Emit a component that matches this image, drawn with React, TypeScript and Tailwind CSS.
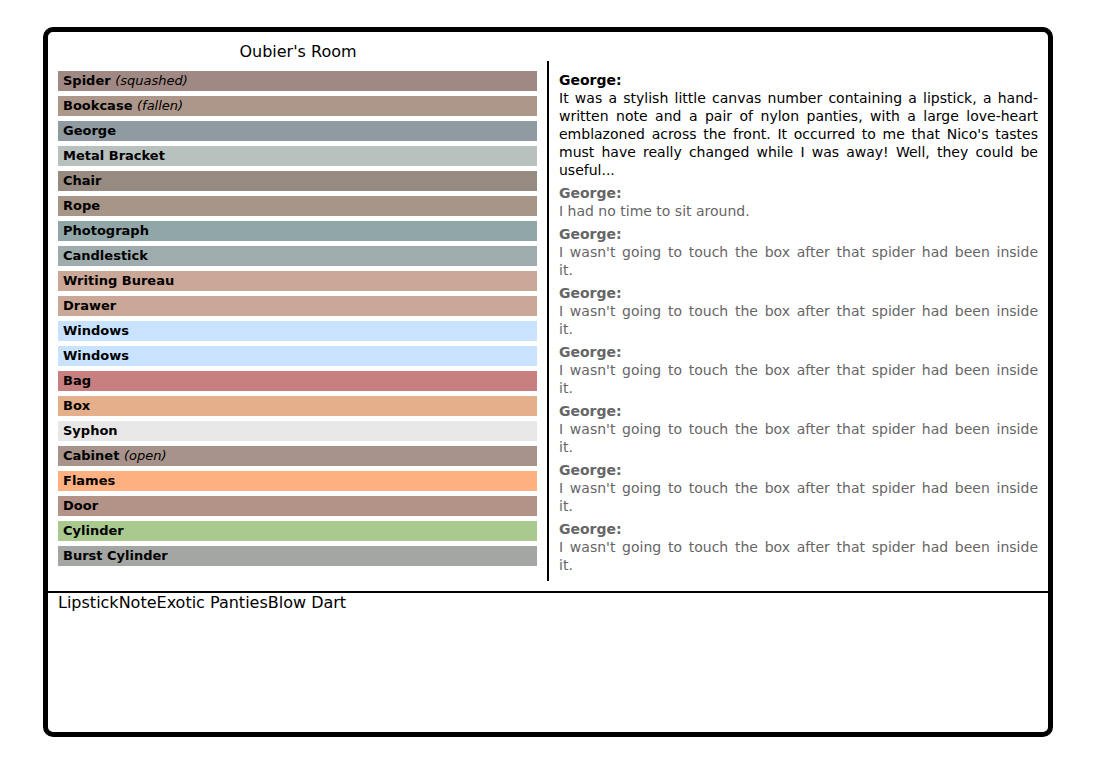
type RoomObject = { name: string; state?: string; color: string };
type Line = { speaker: string; text: string };

const objects: RoomObject[] = [
  { name: "Spider", state: "squashed", color: "bg-[#a08984]" },
  { name: "Bookcase", state: "fallen", color: "bg-[#ad978a]" },
  { name: "George", color: "bg-[#909ba1]" },
  { name: "Metal Bracket", color: "bg-[#b9c1bf]" },
  { name: "Chair", color: "bg-[#968a81]" },
  { name: "Rope", color: "bg-[#a79588]" },
  { name: "Photograph", color: "bg-[#91a6a7]" },
  { name: "Candlestick", color: "bg-[#9eacad]" },
  { name: "Writing Bureau", color: "bg-[#cba798]" },
  { name: "Drawer", color: "bg-[#cba798]" },
  { name: "Windows", color: "bg-[#c9e3ff]" },
  { name: "Windows", color: "bg-[#c9e3ff]" },
  { name: "Bag", color: "bg-[#c87f7f]" },
  { name: "Box", color: "bg-[#e4af8a]" },
  { name: "Syphon", color: "bg-[#e7e7e7]" },
  { name: "Cabinet", state: "open", color: "bg-[#a7938b]" },
  { name: "Flames", color: "bg-[#ffb081]" },
  { name: "Door", color: "bg-[#b39288]" },
  { name: "Cylinder", color: "bg-[#aac98e]" },
  { name: "Burst Cylinder", color: "bg-[#a4a6a3]" },
];

// A newline in a text is a fixed line break; the line before it stays justified.
const spiderLine: Line = {
  speaker: "George",
  text: "I wasn't going to touch the box after that spider had been inside\nit.",
};

const dialogue: Line[] = [
  {
    speaker: "George",
    text: "It was a stylish little canvas number containing a lipstick, a hand-written note and a pair of nylon panties, with a large love-heart emblazoned across the front. It occurred to me that Nico's tastes must have really changed while I was away! Well, they could be useful...",
  },
  { speaker: "George", text: "I had no time to sit around." },
  spiderLine,
  spiderLine,
  spiderLine,
  spiderLine,
  spiderLine,
  spiderLine,
];

const inventory = ["Lipstick", "Note", "Exotic Panties", "Blow Dart"];

function ObjectList() {
  return (
    <ul className="flex flex-col gap-[5px]">
      {objects.map((object, i) => (
        <li key={i}>
          <button
            type="button"
            className={`block h-5 w-full px-[5px] text-left text-[13px] leading-5 font-bold ${object.color}`}
          >
            {object.name}
            {object.state && (
              <>
                {" "}
                <em className="font-normal">({object.state})</em>
              </>
            )}
          </button>
        </li>
      ))}
    </ul>
  );
}

function Dialogue() {
  return (
    <div className="flex flex-col gap-[5px] text-justify text-[14px] leading-[18px]">
      {dialogue.map((line, i) => (
        <div key={i} className={i === 0 ? "text-black" : "text-[#666666]"}>
          <strong className="block font-bold">{line.speaker}:</strong>
          <p>
            {line.text.split("\n").map((part, j, parts) => (
              <span
                key={j}
                className={j < parts.length - 1 ? "block [text-align-last:justify]" : "block"}
              >
                {part}
              </span>
            ))}
          </p>
        </div>
      ))}
    </div>
  );
}

export default function App() {
  return (
    <div className="flex min-h-screen flex-col bg-white pt-[27px] pr-10 pb-[22px] pl-[43px] font-['DejaVu_Sans',sans-serif] text-base text-black">
      <main className="flex grow flex-col rounded-[10px] border-[5px] border-black">
        <section className="grid grid-cols-2 border-b-2 border-black py-[10px]">
          <h1 className="px-[10px] text-center leading-[19px]">Oubier's Room</h1>
          <div className="col-span-2 grid grid-cols-[1fr_2px_1fr]">
            <div className="p-[10px] pb-[15px]">
              <ObjectList />
            </div>
            <div className="bg-black" />
            <div className="px-[10px] pt-[10px] pb-[6px]">
              <Dialogue />
            </div>
          </div>
        </section>
        <footer className="flex flex-wrap px-[10px] leading-[19px]">
          {inventory.map((item) => (
            <button key={item} type="button">
              {item}
            </button>
          ))}
        </footer>
      </main>
    </div>
  );
}
